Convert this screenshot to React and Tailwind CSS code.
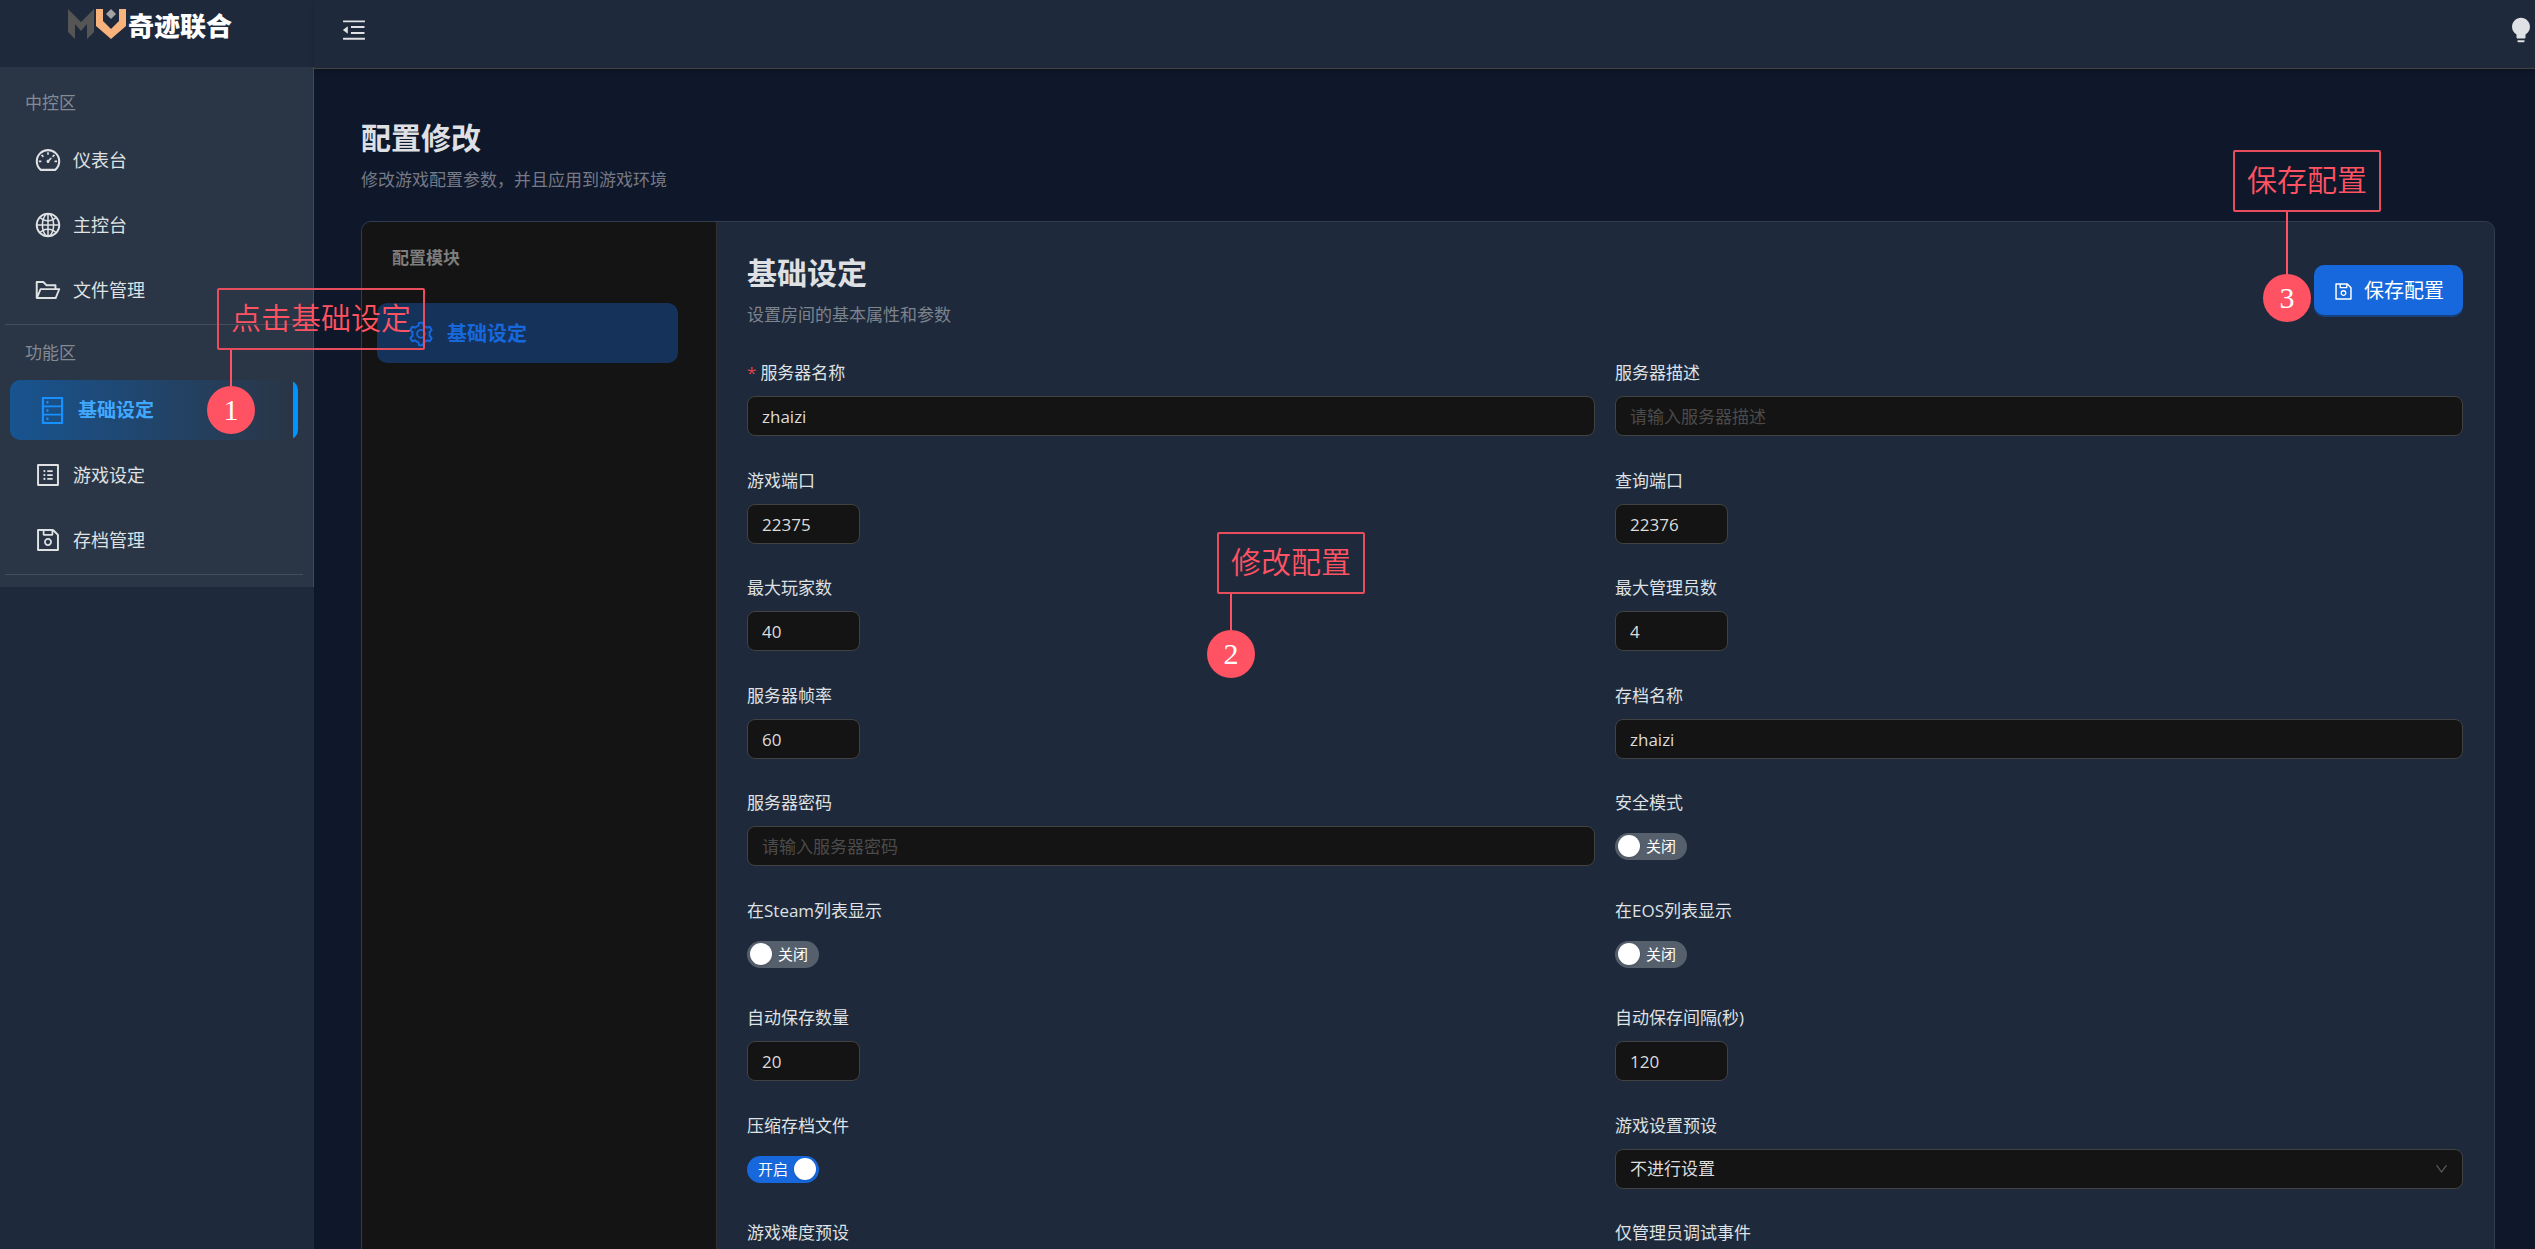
import { useState } from "react";
import {
  AiFillBulb,
  AiOutlineDashboard,
  AiOutlineDatabase,
  AiOutlineDown,
  AiOutlineFolderOpen,
  AiOutlineGlobal,
  AiOutlineMenuFold,
  AiOutlineProfile,
  AiOutlineSave,
  AiOutlineSetting,
} from "react-icons/ai";

const NAV = [
  {
    title: "中控区",
    items: [
      { label: "仪表台", icon: AiOutlineDashboard },
      { label: "主控台", icon: AiOutlineGlobal },
      { label: "文件管理", icon: AiOutlineFolderOpen },
    ],
  },
  {
    title: "功能区",
    items: [
      { label: "基础设定", icon: AiOutlineDatabase, active: true },
      { label: "游戏设定", icon: AiOutlineProfile },
      { label: "存档管理", icon: AiOutlineSave },
    ],
  },
];

// Order matters: fields fill the two column grid left to right.
const FIELDS = [
  { id: "name", label: "服务器名称", type: "text", value: "zhaizi", required: true },
  { id: "desc", label: "服务器描述", type: "text", placeholder: "请输入服务器描述" },
  { id: "port", label: "游戏端口", type: "number", value: "22375" },
  { id: "queryPort", label: "查询端口", type: "number", value: "22376" },
  { id: "maxPlayers", label: "最大玩家数", type: "number", value: "40" },
  { id: "maxAdmins", label: "最大管理员数", type: "number", value: "4" },
  { id: "fps", label: "服务器帧率", type: "number", value: "60" },
  { id: "saveName", label: "存档名称", type: "text", value: "zhaizi" },
  { id: "password", label: "服务器密码", type: "text", placeholder: "请输入服务器密码" },
  { id: "safeMode", label: "安全模式", type: "switch", value: false },
  { id: "steam", label: "在Steam列表显示", type: "switch", value: false },
  { id: "eos", label: "在EOS列表显示", type: "switch", value: false },
  { id: "saveCount", label: "自动保存数量", type: "number", value: "20" },
  { id: "saveInterval", label: "自动保存间隔(秒)", type: "number", value: "120" },
  { id: "compress", label: "压缩存档文件", type: "switch", value: true },
  { id: "preset", label: "游戏设置预设", type: "select", options: ["不进行设置"] },
  { id: "difficulty", label: "游戏难度预设", type: "select", options: ["不进行设置"] },
  { id: "adminDebug", label: "仅管理员调试事件", type: "select", options: ["关闭", "开启"] },
];

const CONTROL =
  "h-10 rounded-lg border border-[#424242] bg-[#141414] px-3.5 text-[#dcdcdc] outline-none placeholder:text-[#4b4b4b]";

function Logo() {
  return (
    <div className="flex h-[67px] items-start pl-[68px] pt-[9px]">
      <svg width="60" height="30" viewBox="0 0 60 30" aria-hidden="true">
        <path d="M0 0L13 13L26 0V23L19 30V15L13 22L7 15V30L0 23Z" fill="#555555" />
        <path d="M28 0H35V12L43 20L51 12V0H58V17L43 30L28 17Z" fill="#f8b27c" />
        <path d="M43 0L48 5L43 10L38 5Z" fill="#a3a3a3" />
      </svg>
      <span className="pt-0.5 text-[26px] font-black leading-[30px] text-white">奇迹联合</span>
    </div>
  );
}

function NavItem({ item }) {
  const Icon = item.icon;
  if (item.active) {
    return (
      <a
        href="#"
        aria-current="page"
        className="flex h-[60px] items-center gap-2.5 overflow-hidden rounded-[10px] bg-linear-to-r from-[#185490] to-transparent pl-[27px] text-[19px] font-bold text-[#40a9ff]"
      >
        <Icon size={31} className="text-[#1890ff]" />
        <span className="flex-1">{item.label}</span>
        <span className="h-[58px] w-[5px] bg-[#0094ff]" />
      </a>
    );
  }
  return (
    <a href="#" className="flex h-[60px] items-center gap-[11px] rounded-[10px] pl-6 text-lg text-[#dfe1e3]">
      <Icon size={28} />
      <span>{item.label}</span>
    </a>
  );
}

function Sidebar() {
  return (
    <aside className="w-[314px] shrink-0 bg-[#1e293b]">
      <Logo />
      <nav className="border-r border-[#414c5a] bg-[#2a3545] pb-3 pt-2">
        {NAV.map((group) => (
          <section key={group.title} className="mr-2.5 ml-[5px] border-b border-[#434d5b] pb-1">
            <h2 className="flex h-[55px] items-center pl-5 text-[#838a94]">{group.title}</h2>
            <div className="mx-[5px] flex flex-col gap-[5px]">
              {group.items.map((item) => (
                <NavItem key={item.label} item={item} />
              ))}
            </div>
          </section>
        ))}
      </nav>
    </aside>
  );
}

function Switch({ id, defaultChecked }) {
  const [on, setOn] = useState(defaultChecked);
  return (
    <label
      className={
        on
          ? "relative flex h-[27px] w-[72px] flex-row-reverse items-center gap-1.5 rounded-full bg-[#1668dc] px-[3px]"
          : "relative flex h-[27px] w-[72px] items-center gap-1.5 rounded-full bg-[#565f6c] px-[3px]"
      }
    >
      <input
        id={id}
        type="checkbox"
        role="switch"
        checked={on}
        onChange={(e) => setOn(e.target.checked)}
        className="sr-only"
      />
      <span className="size-[22px] rounded-full bg-white shadow" />
      <span className="text-[15px] leading-none text-white">{on ? "开启" : "关闭"}</span>
    </label>
  );
}

function Control({ field }) {
  if (field.type === "switch") return <Switch id={field.id} defaultChecked={field.value} />;

  if (field.type === "select") {
    return (
      <div className="relative w-full">
        <select id={field.id} className={`${CONTROL} w-full appearance-none`}>
          {field.options.map((o) => (
            <option key={o}>{o}</option>
          ))}
        </select>
        <AiOutlineDown
          size={15}
          className="pointer-events-none absolute right-3.5 top-1/2 -translate-y-1/2 text-[#5a5a5a]"
        />
      </div>
    );
  }

  return (
    <input
      id={field.id}
      type="text"
      inputMode={field.type === "number" ? "numeric" : undefined}
      defaultValue={field.value}
      placeholder={field.placeholder}
      className={field.type === "number" ? `${CONTROL} w-[113px]` : `${CONTROL} w-full`}
    />
  );
}

function Field({ field }) {
  return (
    <div>
      <label htmlFor={field.id} className="mb-2 flex h-[30px] items-center gap-1 text-[#dfe1e4]">
        {field.required && <span className="text-[#dc4446]">*</span>}
        {field.label}
      </label>
      <div className="flex h-10 items-center">
        <Control field={field} />
      </div>
    </div>
  );
}

// Tutorial marker: boxed hint with a lead line down to a numbered dot.
function Callout({ step, text, className, stemClassName }) {
  return (
    <div className={`pointer-events-none absolute text-[#ff5262] ${className}`}>
      <div className="flex h-[62px] items-center rounded-xs border-2 border-[#e84d5e] px-3 pb-0.5 text-3xl font-[350] whitespace-nowrap">
        {text}
      </div>
      <div className={`flex w-12 flex-col items-center ${stemClassName}`}>
        <span className="w-0.5 flex-1 bg-[#ff5262]" />
        <span className="flex size-12 items-center justify-center rounded-full bg-[#ff5262] font-['Liberation_Serif',serif] text-3xl text-white">
          {step}
        </span>
      </div>
    </div>
  );
}

export default function App() {
  return (
    <div className="relative flex h-screen overflow-hidden bg-[#0f172a] font-['Open_Sans','Noto_Sans_CJK_SC',sans-serif] text-[17px]">
      <Sidebar />

      <div className="flex min-w-0 flex-1 flex-col">
        <header className="z-10 flex h-[69px] shrink-0 items-start justify-between border-b border-[#424242] bg-[#1e293b] pl-[26px] text-[#dfe1e4] shadow-md">
          <button type="button" aria-label="收起菜单" className="flex h-[60px] items-center">
            <AiOutlineMenuFold size={28} />
          </button>
          <button type="button" aria-label="切换主题" className="flex h-[60px] items-center">
            <AiFillBulb size={28} />
          </button>
        </header>

        <main className="flex-1 overflow-y-auto pt-12 pr-10 pl-[47px] [scrollbar-width:none]">
          <h1 className="text-3xl leading-[42px] font-bold text-[#dfe0e4]">配置修改</h1>
          <p className="mt-[7px] leading-7 text-[#757a86]">修改游戏配置参数，并且应用到游戏环境</p>

          <div className="mt-[27px] flex overflow-hidden rounded-[10px] border border-[#303d4f] bg-[#1e293b]">
            <aside className="w-[355px] shrink-0 border-r border-[#303030] bg-[#141414] pt-[21px] pr-[38px] pl-[15px]">
              <h2 className="pl-[15px] leading-[30px] font-bold text-[#7d7d7d]">配置模块</h2>
              <button
                type="button"
                className="mt-[30px] flex h-[60px] w-full items-center gap-3 rounded-[10px] bg-[#15325b] pt-0.5 pl-[30px] text-xl font-bold text-[#1668dc]"
              >
                <AiOutlineSetting size={28} />
                基础设定
              </button>
            </aside>

            <form className="min-w-0 flex-1 pt-[30px] pr-[31px] pl-[30px]" onSubmit={(e) => e.preventDefault()}>
              <div className="flex items-start justify-between">
                <div>
                  <h2 className="text-3xl leading-[42px] font-bold text-[#dfe0e4]">基础设定</h2>
                  <p className="mt-[7px] leading-7 text-[#7d838d]">设置房间的基本属性和参数</p>
                </div>
                <button
                  type="submit"
                  className="mt-[13px] flex h-[50px] items-center gap-2.5 rounded-[10px] bg-[#1668dc] px-[19px] pt-0.5 text-xl text-white shadow-[0_2px_0_#18417c]"
                >
                  <AiOutlineSave size={21} />
                  保存配置
                </button>
              </div>

              <div className="mt-[29px] grid auto-rows-[78px_77px] grid-cols-2 gap-x-5 gap-y-[30px] pb-[30px]">
                {FIELDS.map((field) => (
                  <Field key={field.id} field={field} />
                ))}
              </div>
            </form>
          </div>
        </main>
      </div>

      <Callout step="1" text="点击基础设定" className="top-[288px] left-[217px] z-20" stemClassName="-ml-[10px] h-[84px]" />
      <Callout step="2" text="修改配置" className="top-[532px] left-[1217px] z-20" stemClassName="-ml-[10px] h-[84px]" />
      <Callout step="3" text="保存配置" className="top-[150px] right-[154px] z-20" stemClassName="ml-[30px] h-[110px]" />
    </div>
  );
}
